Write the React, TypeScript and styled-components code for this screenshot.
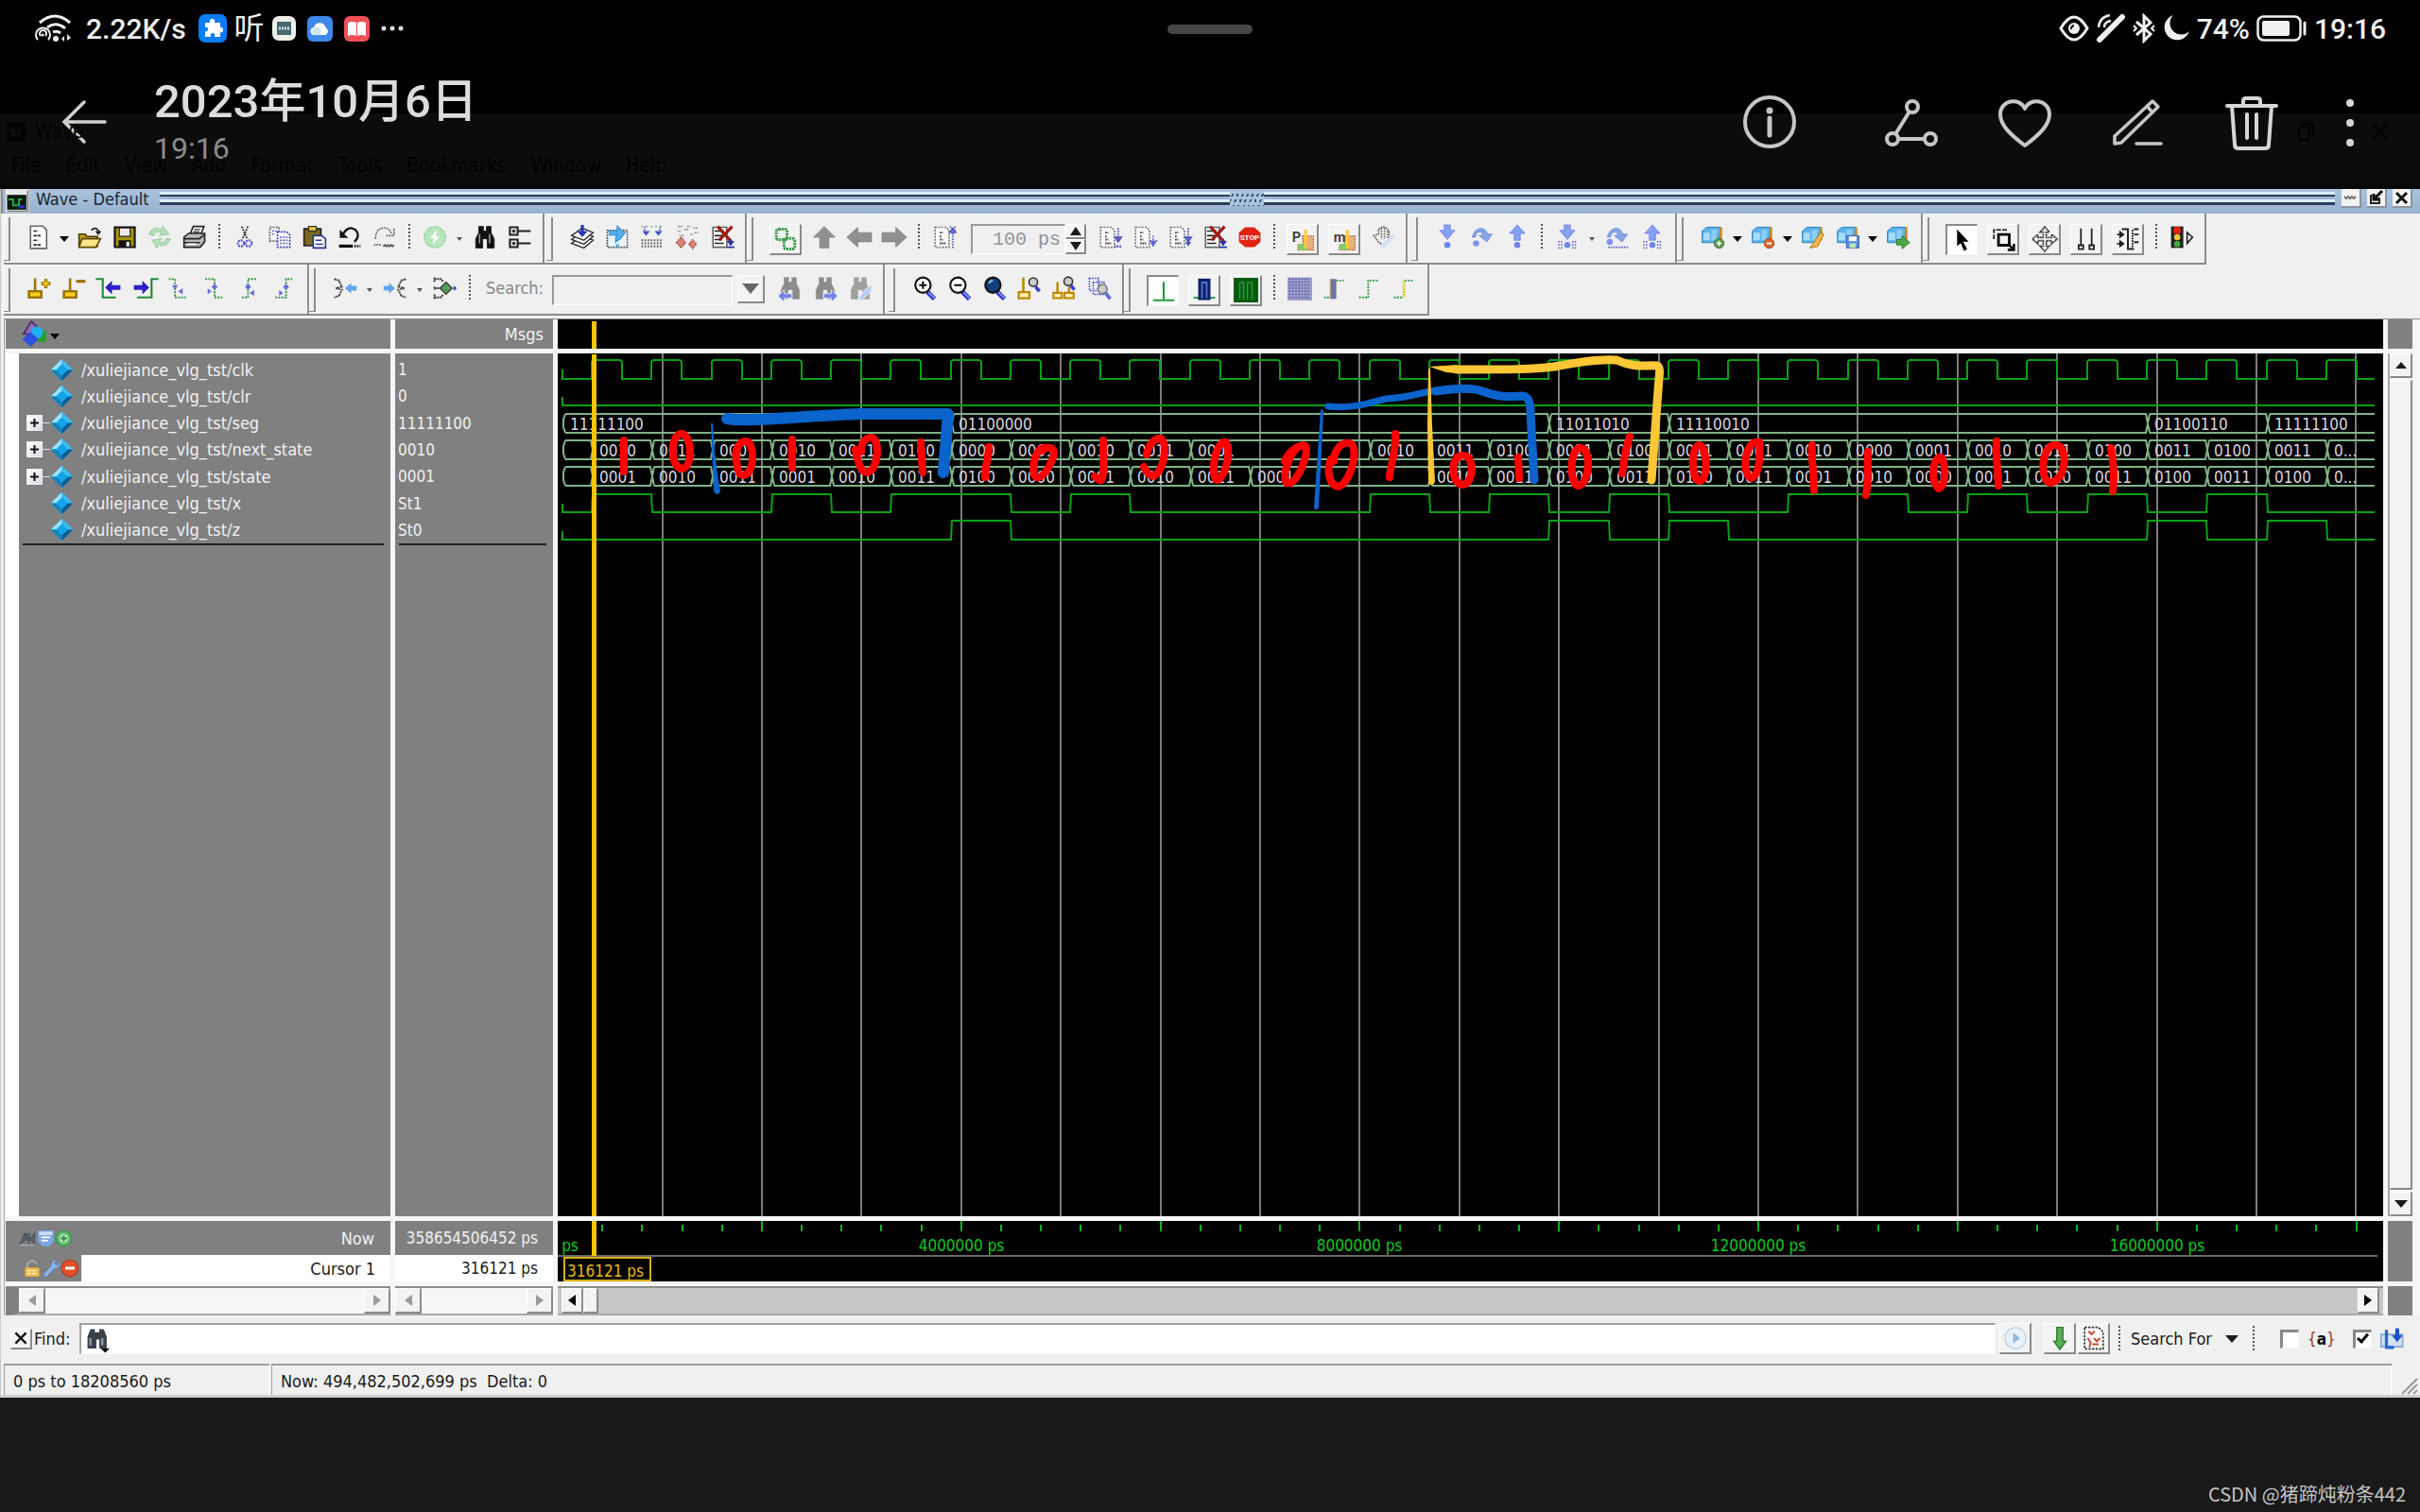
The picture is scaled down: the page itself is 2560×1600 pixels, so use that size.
import React from 'react';
import styled, { createGlobalStyle, css } from 'styled-components';

const UI = "'DejaVu Sans Condensed', Tahoma, 'Noto Sans', sans-serif";
const PHONE = "Roboto, 'Noto Sans CJK SC', sans-serif";

const Global = createGlobalStyle`
  *, *::before, *::after { box-sizing: border-box; }
  html, body, #root { margin: 0; height: 100%; }
  body { background: #191919; font-family: ${UI}; font-size: 18px; color: #1a1a1a; }
  button, input { font: inherit; color: inherit; margin: 0; padding: 0; border: 0; background: none; border-radius: 0; outline: none; }
  svg { display: block; }
`;

/* ---------- phone chrome ---------- */
const Page = styled.div`
  min-height: 100vh;
  display: flex;
  flex-direction: column;
  background: #191919;
`;
const Top = styled.header`
  position: relative;
  height: 200px;
  background: linear-gradient(#000 0 120px, #0c0c0c 120px 192px, #070709 200px);
  font-family: ${PHONE};
  color: #f0f0f0;
`;
const StatusLine = styled.div`
  position: relative;
  height: 60px;
  padding: 0 36px;
  display: flex;
  align-items: center;
  justify-content: space-between;
  font-size: 30px;
  font-weight: 500;
`;
const StatusSide = styled.div<{ $gap: number }>`
  display: flex;
  align-items: center;
  gap: ${(p) => p.$gap}px;
`;
const Listen = styled.span`
  margin: 0 -4px;
  font-size: 32px;
  line-height: 32px;
  font-weight: 400;
`;
const Handle = styled.div`
  position: absolute;
  left: 50%;
  top: 26px;
  width: 90px;
  height: 10px;
  margin-left: -45px;
  border-radius: 5px;
  background: #464646;
`;
const AppBar = styled.div`
  display: flex;
  align-items: flex-start;
  justify-content: space-between;
  padding: 12px 60px 0 60px;
`;
const AppSide = styled.div`
  display: flex;
`;
const BackButton = styled.button`
  width: 56px;
  height: 56px;
  margin: 30px 47px 0 0;
`;
const DateTitle = styled.h1`
  margin: 0;
  font-size: 49px;
  line-height: 72px;
  font-weight: 500;
  color: #dcdcdc;
`;
const DateTime = styled.div`
  font-size: 32px;
  line-height: 26px;
  color: #8c8c8c;
`;
const Actions = styled.div`
  display: flex;
  align-items: center;
  margin-top: 28px;
  gap: 60px;
`;
const ActionButton = styled.button<{ $narrow?: boolean; $first?: boolean }>`
  width: ${(p) => (p.$narrow ? 28 : 60)}px;
  height: 60px;
  margin-right: ${(p) => (p.$first ? 30 : 0)}px;
`;
const GhostTitle = styled.div`
  position: absolute;
  left: 5px;
  top: 126px;
  display: flex;
  align-items: center;
  gap: 8px;
  color: #020202;
  font: 21px/26px ${UI};
`;
const GhostMenu = styled.nav`
  position: absolute;
  left: 12px;
  top: 162px;
  display: flex;
  gap: 26px;
  color: #020202;
  font: 21px/26px ${UI};
`;
const GhostControls = styled.div`
  position: absolute;
  right: 32px;
  top: 128px;
  display: flex;
  gap: 58px;
`;

/* ---------- desktop window ---------- */
const Window = styled.main`
  flex: 1;
  display: flex;
  flex-direction: column;
  background: #f0f0f0;
  border-left: 1px solid #c8c8c8;
  border-bottom: 3px solid #cfcfcf;
`;
const TitleBar = styled.div`
  height: 26px;
  padding: 0 8px 0 3px;
  display: flex;
  align-items: flex-start;
  gap: 7px;
  border-left: 2px solid #8a8a8a;
  background: linear-gradient(#a9c3dc, #98b2d0);
  color: #1c2430;
`;
const TitleText = styled.span`
  line-height: 22px;
  margin-right: 4px;
`;
const GripLines = styled.div`
  flex: 1;
  height: 16px;
  margin-top: 2px;
  display: flex;
  justify-content: center;
  background: linear-gradient(
    transparent 0 1px, #d6effd 1px 4px, #2f3d58 4px 6px,
    #9bb6d4 6px 9px, #d6effd 9px 12px, #2f3d58 12px 15px, transparent 15px);
`;
const GripDots = styled.div`
  width: 36px;
  height: 16px;
  background:
    repeating-linear-gradient(#a9c3dc 0 3px, transparent 3px 6px),
    repeating-linear-gradient(110deg, #a9c3dc 0 3px, #3d5273 3px 5px);
`;
const TitleButtons = styled.div`
  display: flex;
  gap: 6px;
`;
const TitleButton = styled.button`
  width: 21px;
  height: 20px;
  background: #f2f2f2;
  border-right: 2px solid #8a94a0;
  border-bottom: 2px solid #8a94a0;
`;
const ToolbarRow = styled.div`
  display: flex;
  height: 54px;
  padding-left: 3px;
`;
const Group = styled.div<{ $pad?: number }>`
  display: flex;
  align-items: flex-start;
  padding: 11px 6px 0 ${(p) => p.$pad ?? 0}px;
  border: solid #8c8c8c;
  border-width: 0 2px 2px 0;
  box-shadow: inset 1px 1px 0 #fff;
`;
const Handlebar = styled.span`
  width: 7px;
  height: 46px;
  margin: -7px 12px 0 0;
  border: solid #8c8c8c;
  border-width: 0 2px 1px 0;
`;
const raised = css`
  background: #f3f3f3;
  border: solid;
  border-width: 1px 2px 2px 1px;
  border-color: #fff #8a8a8a #8a8a8a #fff;
`;
const pressed = css`
  background: #fff;
  border: solid;
  border-width: 2px 1px 1px 2px;
  border-color: #8a8a8a #f4f4f4 #f4f4f4 #8a8a8a;
`;
const Tool = styled.button<{ $kind?: 'up' | 'down' }>`
  flex: none;
  display: flex;
  align-items: center;
  justify-content: center;
  width: ${(p) => (p.$kind ? 34 : 37)}px;
  height: ${(p) => (p.$kind ? 33 : 28)}px;
  margin: 0 ${(p) => (p.$kind ? 5 : 0)}px;
  ${(p) => p.$kind === 'up' && raised}
  ${(p) => p.$kind === 'down' && pressed}
`;
const Caret = styled.button<{ $dim?: boolean }>`
  flex: none;
  width: 16px;
  height: 28px;
  display: flex;
  align-items: center;
  justify-content: center;
  &::after {
    content: '';
    margin-top: 4px;
    border: solid transparent;
    border-width: ${(p) => (p.$dim ? '4px 3px 0' : '6px 5px 0')};
    border-top-color: ${(p) => (p.$dim ? '#555' : '#000')};
  }
`;
const Sep = styled.span`
  flex: none;
  width: 2px;
  height: 28px;
  margin: 0 7px;
  background: repeating-linear-gradient(#555 0 2px, transparent 2px 4px);
`;
const TimeInput = styled.input`
  width: 100px;
  height: 32px;
  margin-left: 10px;
  padding-right: 4px;
  border: solid;
  border-width: 2px 1px 1px 2px;
  border-color: #999 #fff #fff #999;
  color: #8f9498;
  font: 20px 'Liberation Mono', monospace;
  text-align: right;
`;
const Spinner = styled.div`
  display: flex;
  flex-direction: column;
  width: 22px;
  margin-right: 6px;
`;
const SpinButton = styled.button`
  height: 16px;
  display: flex;
  align-items: center;
  justify-content: center;
  ${raised}
`;
const SearchLabel = styled.label`
  margin: 0 9px;
  color: #858585;
  line-height: 27px;
`;
const SearchInput = styled.input`
  width: 191px;
  height: 32px;
  border: solid;
  border-width: 2px 1px 1px 2px;
  border-color: #999 #fff #fff #999;
`;
const DropButton = styled.button`
  width: 29px;
  height: 30px;
  margin: 0 8px 0 5px;
  display: flex;
  align-items: center;
  justify-content: center;
  ${raised}
`;

/* ---------- panes ---------- */
const Panes = styled.div`
  flex: 1;
  display: grid;
  grid-template-columns: 407px 167px 1fr 26px;
  grid-template-rows: 31px 1fr 64px 31px;
  gap: 5px;
  margin: 3px 0 0 3px;
  padding: 0 8px 0 1px;
  background: #f6f6f6;
  border-top: 1px solid #8c8c8c;
  border-left: 1px solid #a0a0a0;
`;
const HeadCell = styled.div<{ $end?: boolean }>`
  display: flex;
  align-items: center;
  justify-content: ${(p) => (p.$end ? 'flex-end' : 'flex-start')};
  padding: 0 10px 0 17px;
  background: #808080;
  color: #f4f4f4;
`;
const Black = styled.div`
  min-width: 0;
  overflow: hidden;
  background: #000;
`;
const Gray = styled.div`
  background: #808080;
`;
const NamesPane = styled.div`
  border-left: 14px solid #fff;
  background: #808080;
  color: #f2f2f2;
`;
const ValuesPane = styled(NamesPane)`
  border-left: 0;
  font-size: 17px;
`;
const SignalList = styled.ul`
  list-style: none;
  margin: 0;
  padding: 3px 0 0;
  height: 201px;
  display: grid;
  grid-template-rows: repeat(7, 1fr);
`;
const NameRow = styled.li`
  display: flex;
  align-items: center;
  padding-left: 8px;
`;
const ExpandSlot = styled.span`
  width: 25px;
  display: flex;
  align-items: center;
  &:has(button)::after {
    content: '';
    flex: 1;
    height: 1px;
    background: #ddd;
  }
`;
const Expand = styled.button`
  width: 17px;
  height: 17px;
  display: flex;
  align-items: center;
  justify-content: center;
  background: linear-gradient(135deg, #fff, #d8dbe4);
  border: 1px solid #eee;
`;
const SignalName = styled.span`
  margin-left: 8px;
`;
const ValueRow = styled.li`
  display: flex;
  align-items: center;
  padding-left: 3px;
`;
const EndLine = styled.div`
  height: 2px;
  margin: 0 7px 0 4px;
  background: #222;
`;
const CursorCell = styled.div`
  display: grid;
  grid-template-rows: 36px 28px;
  background: #808080;
`;
const NowRow = styled.div<{ $small?: boolean }>`
  display: flex;
  align-items: center;
  justify-content: space-between;
  padding: 0 ${(p) => (p.$small ? 16 : 17)}px 0 ${(p) => (p.$small ? 0 : 14)}px;
  font-size: ${(p) => (p.$small ? 17 : 18)}px;
  white-space: nowrap;
  color: #f2f2f2;
`;
const CursorRow = styled.div<{ $small?: boolean }>`
  display: flex;
  align-items: center;
  justify-content: flex-end;
  padding-right: 16px;
  font-size: ${(p) => (p.$small ? 17 : 18)}px;
  background: #fff;
`;
const CursorIcons = styled.div`
  display: flex;
  align-items: center;
  margin-left: 18px;
`;
const CursorLine = styled.div`
  display: grid;
  grid-template-columns: 80px 1fr;
`;
const HScroll = styled.div<{ $inset?: number; $dark?: boolean }>`
  display: flex;
  justify-content: space-between;
  border-left: ${(p) => p.$inset ?? 0}px solid #808080;
  border-top: 2px solid #8c8c8c;
  border-bottom: 2px solid #a8a8a8;
  padding: 0 ${(p) => (p.$dark ? 4 : 0)}px;
  background: ${(p) => (p.$dark ? '#c6c6c6' : '#f6f6f6')};
`;
const ScrollButton = styled.button<{ $small?: boolean; $disabled?: boolean }>`
  width: ${(p) => (p.$small ? 23 : 28)}px;
  height: 27px;
  display: flex;
  align-items: center;
  justify-content: center;
  color: ${(p) => (p.$disabled ? '#9a9a9a' : '#000')};
  ${raised}
`;
const Thumb = styled.div`
  width: 16px;
  margin-right: auto;
  ${raised}
`;
const VScroll = styled.div`
  display: flex;
  flex-direction: column;
  border-left: 2px solid #a4a4a4;
`;
const VButton = styled.button`
  height: 26px;
  display: flex;
  align-items: center;
  justify-content: center;
  ${raised}
`;
const VThumb = styled.div`
  flex: 1;
  margin: 2px 0;
  ${raised}
`;

/* ---------- bottom bars ---------- */
const FindBar = styled.form`
  height: 51px;
  display: flex;
  align-items: center;
  padding: 0 16px 2px 10px;
`;
const CloseFind = styled.button`
  width: 23px;
  height: 22px;
  margin-right: 2px;
  display: flex;
  align-items: center;
  justify-content: center;
  ${raised}
`;
const FindField = styled.div`
  flex: 1;
  display: flex;
  align-items: center;
  height: 33px;
  margin: 0 4px 0 9px;
  padding-left: 5px;
  background: #fff;
  border: solid;
  border-width: 2px 1px 1px 2px;
  border-color: #a0a0a0 #f4f4f4 #f4f4f4 #a0a0a0;
`;
const FindInput = styled.input`
  flex: 1;
  height: 28px;
`;
const FindButton = styled(Tool)`
  margin: 0 2px 0 0;
`;
const Spacer = styled.span`
  width: 11px;
`;
const SearchFor = styled.button`
  display: flex;
  align-items: center;
  gap: 14px;
  margin: 0 8px 0 4px;
`;
const OptionLabel = styled.label`
  display: flex;
  align-items: center;
  gap: 9px;
  margin-left: 20px;
`;
const Check = styled.input`
  appearance: none;
  width: 20px;
  height: 20px;
  background: #fff;
  border: solid;
  border-width: 3px 1px 1px 3px;
  border-color: #888 #f4f4f4 #f4f4f4 #888;
  &:checked::after {
    content: '';
    display: block;
    width: 7px;
    height: 12px;
    margin: -1px 0 0 4px;
    border: solid #000;
    border-width: 0 3px 3px 0;
    transform: rotate(40deg);
  }
`;
const Braces = styled.span`
  color: #9a3a20;
  width: 28px;
  font-size: 17px;
  b { color: #000; }
`;
const StatusBar = styled.footer`
  height: 33px;
  display: flex;
  align-items: stretch;
  gap: 2px;
  padding: 0 2px 0 3px;
`;
const StatusCell = styled.div<{ $fill?: boolean }>`
  ${(p) => (p.$fill ? 'flex: 1;' : 'width: 281px;')}
  padding: 1px 9px 0;
  display: flex;
  align-items: center;
  white-space: pre;
  border: solid #a0a0a0;
  border-width: 2px 0 0 1px;
  box-shadow: inset -1px 0 0 #fff;
`;
const SizeGrip = styled.div`
  width: 26px;
  display: flex;
  align-items: flex-end;
  justify-content: flex-end;
`;
const Watermark = styled.div`
  height: 121px;
  display: flex;
  align-items: flex-end;
  justify-content: flex-end;
  padding: 0 15px 5px;
  color: #c4c4c4;
  font: 20px/28px 'Noto Sans CJK SC', sans-serif;
`;

/* ---------- icons, all on a 16 unit grid ---------- */
const dash = { strokeDasharray: '1 .7' };
const Fall = ({ x }: { x: number }) => (
  <g stroke="#4f52c0" fill="#6f72d8"><path d={`M${x} 2v9`} {...dash} /><path d={`M${x - 2} 8h4l-2 3z`} /></g>
);
const doc = <path d="M2 1.5h7l2 2v11H2z" fill="#fafafa" stroke="#777" strokeDasharray="1.2 .8" />;
const docLines = <path d="M5 5h2M5 7.500h1M5 9.500h2M5 12h4" stroke="#444" strokeWidth="1.200" strokeDasharray="1 .4" fill="none" />;
const bino = (c: string, d?: object) => (
  <path d="M4 1h3v3h2V1h3v4l2 4v6H9.500V9h-3v6H2V9l2-4z" fill={c} stroke={c} strokeWidth=".5" {...d} />
);
const box3d = (
  <g><path d="M1 4l3-2.500h9L12 10l-2 1.500H1z" fill="#5ab4ec" stroke="#2a7dbd" strokeWidth=".6" /><path d="M2 5h4v5H1.500z" fill="#a8dcf8" /><path d="M7 3h4l-1 7H7z" fill="#8ccdf4" /><path d="M12.500 1.500h1.500v8l-2 2h-1.500l1.500-2z" fill="#c98a28" /></g>
);
const stick = (x: number) => <path d={`M${x} 1.500v8.500M${x - 4} 10h8v4h-8z`} stroke="#9c7400" strokeWidth="1.600" fill="#ffd21e" />;
const lens = (c: string) => (
  <g><path d="M10 10.500l4.500 4.500" stroke="#2b2fd0" strokeWidth="3" /><path d="M10.500 10.500l4 4" stroke="#8b9cf5" strokeWidth="1" /><circle cx="7" cy="6" r="5" fill={c} stroke="#111" strokeWidth="1.300" /></g>
);
const blueArrow = (x: number, up?: boolean) => (
  <path d={up ? `M${x} 0l5 5.500h-3v4.500h-4V5.500H${x - 5}z` : `M${x - 2} 0h4v3.500h3l-5 6-5-6h3z`} fill="#86a0f2" stroke="#5b6ee6" strokeWidth=".6" strokeDasharray="1 .5" />
);
const curve = <path d="M1.500 8C3 1 10 .5 11.500 6h3l-3.500 5-5-4 2.500-.5C7.500 3.500 4 4 3.500 8z" fill="#86a6e6" stroke="#5b7be0" strokeWidth=".6" strokeDasharray="1 .5" />;
const wave = (d: string, c = '#2f9a48') => <path d={d} stroke={c} strokeWidth="1.200" fill="none" strokeDasharray="1.200 .8" />;
const gridDots = (y: number) => <path d={`M1 ${y}h14M1 ${y + 2}h14M1 ${y + 4}h14`} stroke="#444d" strokeWidth="1.200" strokeDasharray="1 1" />;
const profile = (
  <g><path d="M8 6h7v9H5v-3h3z" fill="#e9b080" stroke="#c07040" strokeDasharray="1 .7" /><path d="M5 11h6v4H5z" fill="#7fd06a" /><path d="M10 2v12" stroke="#ffc840" strokeWidth="2" /></g>
);

const ICONS: Record<string, React.ReactNode> = {
  ghost: <g><path d="M1 2h14v13H1z" fill="#050505" /><path d="M3 7h3v4h4V7h2" stroke="#111" fill="none" /></g>,
  new: <g><path d="M2 .8h8l2.500 2.500v12H2z" fill="#fff" stroke="#666" /><path d="M4 4h3M4 7h5M4 10h3M4 13h5" stroke="#222" strokeDasharray="2 .6" /></g>,
  open: <g><path d="M1 6h4l1 1.500h7V14H1z" fill="#c8a028" stroke="#4a3a00" /><path d="M3 9h12l-3 5.500H1z" fill="#ffe58a" stroke="#5a4700" /><path d="M9 3.500q2.500-2.500 4.500 0v2M12 4l1.500 2 1.500-2" fill="none" stroke="#222" /></g>,
  save: <g><path d="M1.500 1.500h13v13h-13z" fill="#a59300" stroke="#111" strokeWidth="1.300" /><path d="M4.500 2h7v5.500h-7z" fill="#eee" stroke="#222" strokeWidth=".7" /><path d="M4 10h8v4.500H4z" fill="#111" /><path d="M9 11h2v3H9z" fill="#eee" /></g>,
  refresh: <g fill="#b5e0ba" stroke="#86c490" strokeWidth=".7" strokeDasharray="1 .6"><path d="M1 6Q4 0 9 3l1-2 4 5-6 1 1-2Q5 3 4 7z" /><path d="M15 9q-3 6-8 4l-1 2-3-5 6-1-1 2q4 1 4-2z" /></g>,
  print: <g><path d="M5 6l2-5h7l-2 5" fill="#fff" stroke="#222" /><path d="M7.500 3h4M7 4.500h4" stroke="#333" strokeWidth=".7" /><path d="M1 8l3-2.500h10.500V11l-3 3.500H1z" fill="#bbb" stroke="#222" /><path d="M1 9h10l3-2.500M1 11.500h10.500" stroke="#222" fill="none" /><path d="M3 12.500h6" stroke="#fff" /></g>,
  cut: <g fill="none" strokeWidth="1.200" strokeDasharray="1.200 .6"><path d="M6 1l3.500 8M10 1L6.500 9" stroke="#444" /><circle cx="5.500" cy="12" r="2" stroke="#3a45d0" /><circle cx="10.500" cy="12" r="2" stroke="#3a45d0" /></g>,
  copy: <g fill="#f6f6f6" strokeDasharray="1.200 .8"><path d="M1.500 1.500h6v9h-6z" stroke="#666" /><path d="M6.500 4.500h6l2 2v8h-8z" stroke="#3743b5" /><path d="M8 8h5M8 10h5M8 12h5M3 4h3M3 6h2" stroke="#5560c0" /></g>,
  paste: <g><path d="M1 2.500h11v11H1z" fill="#7c6a22" stroke="#222" /><path d="M4 1h5v3H4z" fill="#f0d040" stroke="#333" strokeWidth=".8" /><path d="M7 7h5.500L15 9v6H7z" fill="#fff" stroke="#23309a" /><path d="M8.500 10h4M8.500 12.500h5" stroke="#23309a" strokeWidth=".8" /></g>,
  undo: <g fill="none" stroke="#111"><path d="M3 7Q7-.5 12 3.500q3 4-1 7.500" strokeWidth="1.400" /><path d="M1.500 3v5.500H7z" fill="#111" stroke="none" /><path d="M1 13.800h9" strokeWidth="2" /><path d="M11 13.800h4" strokeWidth="1.600" strokeDasharray="1 .7" /></g>,
  redo: <g fill="none" stroke="#555" {...dash}><path d="M2 9q0-7 6-7 3 0 4.500 4" /><path d="M9 7h5V2" /><path d="M1 13h5" /><path d="M7 14l1-1 1 1 1-1 1 1 1-1 1 1 1-1" strokeDasharray="none" /></g>,
  bolt: <g><circle cx="8" cy="8" r="6.800" fill="#b9e6bd" stroke="#8fcf98" strokeDasharray="1 .6" /><path d="M9.500 3L5 8.500h2.500L6.500 13 11 7.500H8.500z" fill="#fff" /></g>,
  find: <g>{bino('#111')}<path d="M4.500 6v6M11 6v6" stroke="#999" /></g>,
  tree: <g fill="none" stroke="#222" strokeWidth="1.300"><path d="M1.500 1.500h5v5h-5zM1.500 9.500h5v5h-5zM7 4h8M7 12h8M4 3v2M3 4h2M4 11v2M3 12h2" /></g>,
  stack: <g stroke="#333" strokeWidth=".9" fill="#fff"><path d="M1 12l8 3 6-5-7-3z" /><path d="M1 9.500l8 3 6-5-7-3z" /><path d="M1 7l8 3 6-5-7-3z" /><path d="M7 0h2v4h2.500L8 8 4.500 4H7z" fill="#2a3ab8" stroke="none" /></g>,
  rebuild: <g><path d="M1.500 3.500h13v11h-13z" fill="#e8f5fc" stroke="#444" {...dash} /><path d="M3 4h5V1l5 4-3 4-3 2v-3l1-1.500H3z" fill="#5ab0ec" stroke="#3d8fd6" strokeDasharray="1.500 .4" /><path d="M7 12.500h2v2H7z" fill="#5ab0ec" /></g>,
  restart: <g><path d="M3 1v3M13 1v3" stroke="#4450c8" {...dash} /><path d="M1.500 4h5l-2.500 3zM9.500 4h5L12 7z" fill="#4450c8" /><path d="M1 1h14" stroke="#999" strokeDasharray="1 2" />{gridDots(10)}</g>,
  dots: <g><path d="M2 1h3M8 1h2M12 2h3M2 4h2M6 3h3M3 7h3M10 6h2M13 5h2" stroke="#888" strokeDasharray="1 .6" /><path d="M1 11.500L4 8l3 3.500L4 15zM9 12.500l2.500-3 2.500 3-2.500 3z" fill="#dd8478" stroke="#a04a40" strokeDasharray="1 .6" strokeWidth=".8" /></g>,
  kill: <g><path d="M2 1.500h9v13H2z" fill="#fff" stroke="#666" /><path d="M3 4h6M3 7h5M3 9.500h5M3 12h6" stroke="#222" /><path d="M5 1l9 10M14.500 1L6 10" stroke="#a01c10" strokeWidth="2" /><path d="M13.500 9v4M11 14.500h5M12 11h3l-1.500 2z" stroke="#2a33a8" fill="#2a33a8" /></g>,
  link: <g fill="none" stroke="#3a9a4c" strokeWidth="1.800" strokeDasharray="1.400 .5"><rect x="2" y="1.500" width="7" height="7" rx="1.500" /><rect x="7" y="7.500" width="7" height="7" rx="1.500" /></g>,
  up: <path d="M8 1l7 7h-4v7H5V8H1z" fill="#909090" stroke="#777" strokeWidth=".6" strokeDasharray="1 .5" />,
  left: <path d="M0 8l7-6.500V5h9v6H7v3.500z" fill="#909090" stroke="#777" strokeWidth=".6" strokeDasharray="1 .5" />,
  right: <path d="M16 8L9 1.500V5H0v6h9v3.500z" fill="#909090" stroke="#777" strokeWidth=".6" strokeDasharray="1 .5" />,
  runUp: <g>{doc}{docLines}<path d="M13.500 15V4" stroke="#4f52c0" {...dash} /><path d="M11.500 1l4 3M15.500 1l-4 3M11.500 5h4l-2-3z" stroke="#4f52c0" fill="#6f72d8" strokeWidth=".7" /></g>,
  runEnd: <g>{doc}{docLines}<Fall x={13.5} /><path d="M11 14h5" stroke="#4f52c0" strokeWidth="1.400" {...dash} /></g>,
  runStep: <g>{doc}{docLines}<path d="M13.500 7v6M11.500 10.500h4l-2 3z" stroke="#4f52c0" fill="#6f72d8" {...dash} /></g>,
  runAll: <g>{doc}{docLines}<Fall x={13.5} /><path d="M11.500 11h4l-2 3z" fill="#4f52c0" /></g>,
  stop: <g><path d="M5 1.500h6L15 5v6l-4 3.500H5L1 11V5z" fill="#e0220e" /><text x="8" y="10" fontSize="5" fontWeight="700" textAnchor="middle" fill="#fff" fontFamily="Roboto, sans-serif">STOP</text></g>,
  profP: <g>{profile}<text x="1" y="10" fontSize="9" fontWeight="700" fill="#444" fontFamily="Roboto, sans-serif">P</text></g>,
  profM: <g>{profile}<text x="1" y="10" fontSize="9" fontWeight="700" fill="#444" fontFamily="Roboto, sans-serif">m</text></g>,
  hand: <g><path d="M5 6V3l1.500-1L8 1l2 1 2 2v6l-3 4-4-3-3-4z" fill="#eee" stroke="#555" strokeDasharray="1 .7" /><path d="M7 2v7M9 2v7M11 4v5" stroke="#777" {...dash} /><path d="M6 14l8-8 2 2-7 7z" fill="#d5e2f5" /></g>,
  stepIn: <g>{blueArrow(8)}<circle cx="8" cy="13" r="2" fill="#6f86ee" /></g>,
  stepOver: <g>{curve}<circle cx="4" cy="12" r="2" fill="#7b92f0" /></g>,
  stepOut: <g>{blueArrow(8, true)}<circle cx="8" cy="13" r="2" fill="#6f86ee" /></g>,
  stepInG: <g>{blueArrow(8)}<path d="M2 11h3M2 13h3M2 15h3M11 11h3M11 13h3M11 15h3" stroke="#6f74d0" {...dash} /><circle cx="8" cy="13" r="2" fill="#6f86ee" /></g>,
  stepOverG: <g>{curve}<circle cx="3" cy="11" r="2" fill="#7b92f0" /><path d="M2 14.500h13" stroke="#5b60c0" {...dash} /></g>,
  stepOutG: <g>{blueArrow(8, true)}<path d="M2 11h3M2 13h3M2 15h3M11 11h3M11 13h3M11 15h3" stroke="#6f74d0" {...dash} /><circle cx="8" cy="13" r="2" fill="#6f86ee" /></g>,
  boxAdd: <g>{box3d}<circle cx="12" cy="12" r="3.200" fill="#5d9a50" stroke="#3f7438" strokeWidth=".6" /><path d="M12 10.300v3.400M10.300 12h3.400" stroke="#fff" /></g>,
  boxDel: <g>{box3d}<circle cx="12" cy="12" r="3.200" fill="#d9652a" stroke="#a84412" strokeWidth=".6" /><path d="M10.300 12h3.400" stroke="#fff" strokeWidth="1.200" /></g>,
  boxEdit: <g>{box3d}<path d="M13 5l2 1-4 8-5 1 2-3z" fill="#f4b44a" stroke="#b87818" strokeWidth=".6" /></g>,
  boxSave: <g>{box3d}<path d="M7 7h8v8H7z" fill="#5f8fe0" stroke="#3560b8" strokeWidth=".6" /><path d="M8.500 7.500h5v3h-5z" fill="#fff" /><path d="M9 12h4v3H9z" fill="#b8e8b0" /></g>,
  boxGo: <g>{box3d}<path d="M7 9.500h3.500V7l5 4.500-5 4V13H7z" fill="#4fa848" stroke="#2f7a2c" strokeWidth=".6" /></g>,
  pointer: <path d="M4.500 1l7.500 8H8.500l2.500 5-2 1-2.200-5L4.500 12z" fill="#000" />,
  zoomBox: <g fill="none" stroke="#111"><path d="M2 8V2h9" strokeDasharray="3 .8" /><path d="M5 5h7v7H5z" strokeWidth="1.800" /><path d="M11 11l4 4M15 11v4h-4" strokeWidth="1.600" /></g>,
  pan: <g fill="#fff" stroke="#333" strokeWidth="1.100" strokeDasharray="1.200 .4"><path d="M8 0l3 3.500H9V7h3.500V5L16 8l-3.500 3V9H9v3.500h2L8 16l-3-3.500h2V9H3.500v2L0 8l3.500-3v2H7V3.500H5z" /></g>,
  cursors: <g fill="none" stroke="#222" strokeWidth="1.100"><path d="M4.500 1v10.500M11.500 1v10.500M3 12h3v2.500H3zM10 12h3v2.500h-3z" /></g>,
  edges: <g fill="none" stroke="#222" strokeWidth="1.200"><path d="M4 1.500h4v13h4M12 1.500h3" /><path d="M11 2v12" {...dash} /><path d="M1 5h3M1 11h3M12 5h3M12 10h3" /><path d="M3 3.500L5 5 3 6.500zM3 9.500L5 11l-2 1.500z" fill="#222" /></g>,
  light: <g><path d="M1 1h8v14H1z" fill="#222" /><circle cx="5" cy="3.500" r="2.500" fill="#e8200c" /><circle cx="5" cy="8" r="2" fill="#f3c63a" /><circle cx="5" cy="12.500" r="2" fill="#3fae3c" /><path d="M11.500 5l3.500 3-3.500 4z" fill="#fff" stroke="#222" /></g>,
  curAdd: <g>{stick(5)}<path d="M12 2v6M9 5h6" stroke="#9c7400" strokeWidth="2.200" /><path d="M12 3v4M10 5h4" stroke="#ffd21e" /></g>,
  curDel: <g>{stick(5)}<path d="M9 3.500h6" stroke="#9c7400" strokeWidth="2" /></g>,
  prevEdge: <g fill="none" stroke="#1f8a34" strokeWidth="1.300"><path d="M-1 2h4.500v12H12" /><path d="M5 7.500L9.500 3v3H15v3H9.500v3z" fill="#2b20c8" stroke="none" /></g>,
  nextEdge: <g fill="none" stroke="#1f8a34" strokeWidth="1.300"><path d="M3 14h9.500V2H17" /><path d="M11 7.500L6.500 3v3H1v3h5.500v3z" fill="#2b20c8" stroke="none" /></g>,
  edgeA: <g>{wave('M1 2h4v12h7')}<path d="M3 6h4L5 9zM7 10l3-2v4zM10 10h2" fill="#6a6ddc" /></g>,
  edgeB: <g>{wave('M2 2h6v12h5')}<path d="M6 7l2-2 2 2-2 2zM6 10L3.500 8v4z" fill="#6a6ddc" /></g>,
  edgeC: <g>{wave('M3 14h4V2h6')}<path d="M5 7l2-2 2 2-2 2zM8 11l3-2v4z" fill="#6a6ddc" /></g>,
  edgeD: <g>{wave('M2 14h7V2h4')}<path d="M7 7l2-2 2 2-2 2zM7 11L4.500 9v4z" fill="#6a6ddc" /></g>,
  mergeL: <g><path d="M1 2l3 1 2 4-4 1 4 1-2 4-3 1" fill="none" stroke="#444" strokeDasharray="1.400 .5" strokeWidth="1.200" /><path d="M8 8l4-3.500v2h3.500v3H12v2z" fill="#64a4ee" /></g>,
  mergeR: <g><path d="M15 2l-3 1-2 4 4 1-4 1 2 4 3 1" fill="none" stroke="#444" strokeDasharray="1.400 .5" strokeWidth="1.200" /><path d="M8 8L4 4.500v2H.5v3H4v2z" fill="#64a4ee" /></g>,
  gate: <g><path d="M1 2h4l2 2M1 8h4M1 14h4l2-2M1 1v3M1 7v2M1 12v3" fill="none" stroke="#333" strokeDasharray="1.200 .5" strokeWidth="1.200" /><path d="M8.500 4l4 4-4 4-4-4z" fill="#5a9a5c" stroke="#333" strokeWidth=".7" /><path d="M13 8l1-1.500L15.500 8 14 9.500z" fill="#3a45d0" /></g>,
  findPrev: <g>{bino('#8c8c8c', dash)}<path d="M0 13l4-4v2.500h5v3H4V17z" fill="#7a80ea" stroke="#f0f0f0" strokeWidth=".5" /></g>,
  findNext: <g>{bino('#8c8c8c', dash)}<path d="M16 13l-4-4v2.500H7v3h5V17z" fill="#7a80ea" stroke="#f0f0f0" strokeWidth=".5" /></g>,
  findOpt: <g>{bino('#a0a0a0', dash)}<path d="M7 14l5-6 4-2-1 4-6 6z" fill="#b6cdf4" stroke="#f0f0f0" strokeWidth=".5" /></g>,
  zoomIn: <g>{lens('#fff')}<path d="M7 3.500v5M4.500 6h5" stroke="#111" strokeWidth="1.300" /></g>,
  zoomOut: <g>{lens('#fff')}<path d="M4.500 6h5" stroke="#111" strokeWidth="1.300" /></g>,
  zoomFull: <g>{lens('#11407c')}<path d="M4.500 5q.5-2 2.500-2" stroke="#9cc8f0" fill="none" /></g>,
  zoomCur: <g><path d="M4 1v9" stroke="#c08600" strokeWidth="1.600" /><path d="M1 10.500h7v4H1z" fill="#fff3b0" stroke="#c08600" strokeWidth="1.400" /><path d="M12 7l2.500 3" stroke="#3a3fd0" strokeWidth="2.200" /><circle cx="10.500" cy="4" r="2.800" fill="#ccc" stroke="#333" /></g>,
  zoomTwo: <g><path d="M3.500 4v7M11 7v4" stroke="#c08600" strokeWidth="1.500" /><path d="M.8 11h5.500v3.500H.8zM8 11h6v3.500H8z" fill="#fff3b0" stroke="#c08600" strokeWidth="1.300" /><path d="M12 6l2.500 3" stroke="#3a3fd0" strokeWidth="2.200" /><circle cx="10.500" cy="3.500" r="2.800" fill="#ccc" stroke="#333" /></g>,
  zoomSel: <g><path d="M1.500 1.500h6v8h-6zM4 4h7v8H4z" fill="none" stroke="#3a45d0" {...dash} /><path d="M12 11l3 4" stroke="#6a6fe0" strokeWidth="2.400" /><circle cx="10" cy="8.500" r="3" fill="#ccc" stroke="#555" strokeDasharray="1 .5" /></g>,
  patA: <path d="M8 2v12M1 14h14" stroke="#1f9a3a" strokeWidth="1.300" />,
  patB: <g><path d="M1 13h14" stroke="#2f9a48" strokeWidth="1.300" /><path d="M4 .5h8v14H4z" fill="#0e1f6c" /><path d="M6.500 13V3h3v10" fill="none" stroke="#5a80d0" /></g>,
  patC: <g><path d="M0 0h16v16H0z" fill="#075c10" /><path d="M4 14V3h2.500v11M9 14V3h3v11" fill="none" stroke="#2d9a38" strokeWidth=".8" /></g>,
  patD: <g><path d="M0 1h16v15H0z" fill="#9a9ccc" /><path d="M1 2h14M1 4h14M1 6h14M1 8h14M1 10h14M1 12h14M1 14h14" stroke="#5b5f9c" strokeDasharray="1 1" /></g>,
  patE: <g><path d="M5 2h4v13H5z" fill="#7074a8" />{wave('M1 14h4M9 3h5')}<path d="M5 3v11" stroke="#e0c040" {...dash} /></g>,
  patF: wave('M1 14h6V3h7'),
  patG: <g>{wave('M1 14h6M8 3h6')}<path d="M7.500 3v11" stroke="#d8c820" strokeWidth="1.800" strokeDasharray="1.200 .5" /></g>,
  waveWin: <g><path d="M0 0h16v16H0z" fill="#e8e8e8" /><path d="M1 4h13v10H1z" fill="#041a10" /><path d="M2 7h3v4h4V7h2" stroke="#1fae4a" fill="none" strokeWidth="1.200" /><path d="M9 11h4v2H9z" fill="#2a32c0" /><path d="M15 1v14H1" stroke="#777" fill="none" /></g>,
  objects: <g><path d="M6 0l5 5-2 3H1l2-3z" fill="#8a70b0" stroke="#4a2470" /><path d="M10 6h5.500v7H10z" fill="#2c9c30" /><circle cx="9.500" cy="7" r="3.800" fill="#1fb0f0" /><path d="M5.500 6.500l5 4.700-5 4.800-5-4.800z" fill="#2c50e0" /></g>,
  diamond: <g><path d="M8 .5L15.500 8 8 15.500.5 8z" fill="#16a2e6" /><path d="M8 .5V4L4 8H.5z" fill="#9be4fc" /><path d="M8 .5V4l4 4h3.500z" fill="#3cbcf2" /><path d="M15.500 8H12l-4 4v3.500z" fill="#0a5c94" /><path d="M.5 8H4l4 4v3.500z" fill="#1480bc" /></g>,
  gear: <g><path d="M1 13L5 3l2 6zM6 4h4l-1 9zM10 9l4-6v10z" fill="#5a646e" stroke="#3c444c" strokeWidth=".6" /><path d="M1 14h13" stroke="#a8b2bc" /></g>,
  sheet: <g><path d="M1 1h14v10l-4 4H5l-4-4z" fill="#7aa7e6" /><path d="M2 2h12v3H2z" fill="#c8dcf8" /><path d="M4 7h8M4 10h6" stroke="#fff" strokeWidth="1.400" /></g>,
  plus: <g><circle cx="8" cy="8" r="7" fill="#58b868" stroke="#3b9050" /><circle cx="8" cy="8" r="4" fill="#bfeac4" /><path d="M8 5v6M5 8h6" stroke="#2c8c40" strokeWidth="1.500" /></g>,
  lock: <g><path d="M4 8V4.500Q8-1 12 4.500" fill="none" stroke="#9aa0a8" strokeWidth="2" /><path d="M2 7.500h12V15H2z" fill="#f2bc3c" /><path d="M4 10h8M4 12.500h8" stroke="#fff" strokeDasharray="3 1" /></g>,
  wrench: <path d="M1 14l7-8q0-5 5-5l-2 3 2 1.500L15.500 3q0 5-5 5.500L4 15.500z" fill="#8fb2ea" stroke="#5c7fc0" strokeWidth=".7" />,
  minus: <g><circle cx="8" cy="8" r="7" fill="#e2502c" stroke="#b33c20" /><path d="M4 8h8" stroke="#fff" strokeWidth="2.400" /></g>,
  findDark: <g><path d="M3 1h3v2h3V1h3l2 5v8H9V8H7v6H1V6z" fill="#3a4048" /><path d="M3 7v5M11 7v5" stroke="#8c98a8" strokeWidth="1.600" /><path d="M10 14h6l-3 3z" fill="#000" /></g>,
  play: <g><circle cx="8" cy="8" r="6.800" fill="#e8f0f8" stroke="#b4c6d8" strokeDasharray="1 .6" /><path d="M6.500 4.500L11 8l-4.500 3.500z" fill="#8db8e2" /></g>,
  down: <path d="M6 1h4v9h2L8 15.500 4 10h2z" fill="#5aae54" stroke="#2c7a30" strokeWidth=".8" />,
  report: <g><path d="M2 1h9l3 3v11H2z" fill="#fff" stroke="#333" strokeDasharray="1.500 .8" /><path d="M4.500 3.500l2 2 2-2M8 8l2 2 2-2M4 8l2 3-1 3M7 12h4" fill="none" stroke="#c8442c" strokeWidth="1.200" /></g>,
  wrap: <g><path d="M.5 5h14v8H.5z" fill="#d4e0f4" stroke="#8aa6d8" /><path d="M4 2v11.500h5" fill="none" stroke="#2a66c8" strokeWidth="2" /><path d="M11 1v5" stroke="#1c50c8" strokeWidth="2.500" /><path d="M7.500 5.500h7L11 10z" fill="#1c50c8" /></g>,
};

const IconSvg = styled.svg`
  flex: none;
  overflow: visible;
`;
const Icon = ({ n, size = 26 }: { n: string; size?: number }) => (
  <IconSvg width={size} height={size} viewBox="0 0 16 16" aria-hidden="true">{ICONS[n]}</IconSvg>
);

type Item = string;
/* "+" raised, "-" pressed, "v" caret, "w" dim caret, "|" separator */
const renderItem = (it: Item, i: number) => {
  if (it === '|') return <Sep key={i} />;
  if (it === 'v' || it === 'w') return <Caret key={i} type="button" $dim={it === 'w'} aria-label="More" />;
  const kind = it[0] === '+' ? 'up' : it[0] === '-' ? 'down' : undefined;
  const n = kind ? it.slice(1) : it;
  return <Tool key={i} type="button" $kind={kind} aria-label={n}><Icon n={n} /></Tool>;
};
const Tools = ({ items, pad, children }: { items: Item[]; pad?: number; children?: React.ReactNode }) => (
  <Group $pad={pad}><Handlebar />{items.map(renderItem)}{children}</Group>
);
const Tri = ({ d, w = 10, h = 7, c = 'currentColor' }: { d: 'up' | 'down' | 'left' | 'right'; w?: number; h?: number; c?: string }) => {
  const p = { up: '0,10 10,10 5,0', down: '0,0 10,0 5,10', left: '10,0 10,10 0,5', right: '0,0 0,10 10,5' }[d];
  return <svg width={w} height={h} viewBox="0 0 10 10" preserveAspectRatio="none"><polygon points={p} fill={c} /></svg>;
};

/* ---------- waveform ---------- */
const START = 596;
const END = 2512;
const at = (k: number) => Math.round(627 + 63.27 * k);

const levels = (edges: number[], hi: number, lo: number) => {
  let d = `M${START - 1} ${lo - 9}V${lo}`;
  edges.forEach((k, i) => { d += `H${at(k) - 1}L${at(k)} ${i % 2 ? lo : hi}`; });
  return `${d}H${END}`;
};
const clock = () => {
  let d = 'M595 391V401';
  for (let k = 0; k < 30; k++) d += `H${at(k) - 1}V383L${at(k) + 1} 381H${at(k) + 29}L${at(k) + 31} 383V401`;
  return `${d}H${END}`;
};
type Cells = [number, string][];
const SEG: Cells = [[6, '01100000'], [16, '11011010'], [18, '11110010'], [26, '01100110'], [28, '11111100']];
const cellsOf = (values: string): Cells =>
  values.split(' ').map((v, k) => [k, v] as [number, string]).filter(([, v]) => v !== '-');
const NEXT = cellsOf('0010 0011 0001 0010 0011 0100 0000 0001 0010 0011 0001 - - 0010 0011 0100 0011 0100 0011 0001 0010 0000 0001 0010 0011 0100 0011 0100 0011 0...');
const STATE = cellsOf('0001 0010 0011 0001 0010 0011 0100 0000 0001 0010 0011 0001 - - 0010 0011 0100 0011 0100 0011 0001 0010 0000 0001 0010 0011 0100 0011 0100 0...');

const Bus = ({ cells, y, first }: { cells: Cells; y: number; first?: string }) => {
  let from = START + 2;
  let d = `M${START + 2} ${y}L${START} ${y + 6}V${y + 14}L${START + 2} ${y + 20}`;
  cells.map(([k]) => at(k)).forEach((s) => {
    d += `M${from} ${y}H${s - 2}L${s + 2} ${y + 20}M${from} ${y + 20}H${s - 2}L${s + 2} ${y}`;
    from = s + 2;
  });
  d += `M${from} ${y}H${END}M${from} ${y + 20}H${END}`;
  return (
    <g>
      <path d={d} fill="none" stroke="#7fb487" strokeWidth="2" />
      <g fill="#dcd6de">
        {first && <text x={603} y={y + 17}>{first}</text>}
        {cells.map(([k, v]) => <text key={k} x={at(k) + 7} y={y + 17}>{v}</text>)}
      </g>
    </g>
  );
};

const INK = [
  'M660 466V499', 'M720 459C708 462 709 496 722 496C734 494 732 458 720 459',
  'M779 476C779 492 780 503 786 503C799 503 799 467 789 467C780 467 777 480 779 488', 'M838 465V495',
  'M905 476C908 490 910 500 918 500C930 496 931 464 922 463C914 463 910 472 911 478', 'M974 468L976 500',
  'M1046 473C1046 485 1042 490 1042 505', 'M1102 477C1110 471 1118 474 1114 484C1109 498 1101 507 1096 505C1090 500 1094 476 1104 474',
  'M1167 466C1167 490 1169 510 1163 508L1158 504', 'M1213 481C1215 470 1222 463 1228 464C1235 470 1232 495 1222 503C1216 506 1212 498 1210 494',
  'M1297 468C1284 466 1280 508 1288 508C1298 504 1304 468 1294 468', 'M1381 472C1370 466 1354 500 1361 511C1372 516 1386 476 1381 472C1372 470 1362 480 1359 488',
  'M1408 486C1402 500 1408 515 1416 515C1430 510 1438 472 1428 469C1418 467 1411 478 1411 488', 'M1476 459C1477 480 1471 490 1470 505',
  'M1548 482C1534 480 1534 512 1547 513C1560 512 1560 482 1548 482', 'M1606 484L1607 506',
  'M1672 474C1660 474 1660 512 1669 514C1682 514 1684 474 1672 474', 'M1724 462C1718 480 1718 490 1716 501',
  'M1797 471C1788 474 1789 508 1798 509C1808 508 1806 470 1797 471', 'M1861 468C1846 464 1842 500 1852 506C1862 504 1862 480 1861 468',
  'M1917 471C1916 490 1919 500 1919 519', 'M1976 478C1975 500 1977 505 1974 524',
  'M2052 484C2044 486 2042 510 2051 517C2060 514 2058 482 2052 484', 'M2112 467C2111 490 2114 500 2114 514',
  'M2176 471C2160 468 2156 508 2169 511C2186 508 2188 474 2176 471', 'M2233 474C2236 490 2237 505 2235 520',
];

const WaveBody = () => (
  <svg width="100%" height="100%" role="img" aria-label="Waveform">
    <g transform="translate(-590 -374)" fontFamily={UI} fontSize="17">
      {Array.from({ length: 18 }, (_, i) => {
        const x = Math.round(700.5 + i * 105.4);
        return <line key={i} x1={x} x2={x} y1="374" y2="3000" stroke="#7c7c7c" strokeWidth="2" />;
      })}
      <g fill="none" stroke="#09a012" strokeWidth="2">
        <path d={clock()} />
        <path d={`M595 420V429H${END}`} />
        <path d={levels([0, 1, 3, 4, 5, 7, 8, 9, 13, 14, 15, 16, 17, 18, 20, 22, 23, 24, 25, 26, 27, 28], 523, 542)} />
        <path d={levels([6, 7, 16, 17, 18, 19, 26, 27, 28, 29], 551, 571)} />
      </g>
      <Bus cells={SEG} y={438} first="11111100" />
      <Bus cells={NEXT} y={466} />
      <Bus cells={STATE} y={494} />
      <rect x="626" y="375" width="5" height="3000" fill="#f7c600" />
      <g fill="none" stroke="#ff0000" strokeWidth="8" strokeLinecap="round" strokeLinejoin="round">
        {INK.map((d) => <path key={d} d={d} />)}
      </g>
      <g fill="#0b63cc">
        <path d="M752 448h2q2 40 8 72q-3 6-7 0z" />
        <path d="M1397 434q2-3 3 2l-5 101q-3 5-5 0z" />
      </g>
      <g fill="none" stroke="#0b63cc" strokeLinecap="round" strokeLinejoin="round">
        <path strokeWidth="12" d="M769 443C790 447 850 440 910 438L1003 438L998 500" />
        <path strokeWidth="7" d="M1405 430C1430 433 1450 426 1466 422C1490 421 1500 416 1519 413" />
        <path strokeWidth="9" d="M1519 414C1545 410 1560 411 1568 414C1590 422 1600 419 1612 419Q1619 421 1619 436L1623 508" />
      </g>
      <path d="M1511 390h2l2 60 3 60q-4 7-7 0l-1-60z" fill="#ffc636" />
      <path d="M1512 388L1541 386V395L1530 394z" fill="#ffc636" />
      <path d="M1541 391C1600 391 1620 391 1644 388C1680 381 1700 380 1710 381C1730 390 1740 386 1753 387Q1757 388 1755 400L1747 508" fill="none" stroke="#ffc636" strokeWidth="9" strokeLinejoin="round" strokeLinecap="round" />
    </g>
  </svg>
);

const Ruler = () => (
  <svg width="100%" height="64" role="img" aria-label="Timeline">
    <g transform="translate(-590 -1293)" fontFamily={UI} fontSize="17">
      {Array.from({ length: 45 }, (_, i) => {
        const n = i + 1;
        const x = Math.round(595 + n * 42.17);
        return <line key={n} x1={x} x2={x} y1={n % 5 ? 1297 : 1293} y2="1304" stroke="#0bb41a" strokeWidth="2" />;
      })}
      <g fill="#0ccb1c" textAnchor="middle">
        {[4, 8, 12, 16].map((m) => <text key={m} x={Math.round(595 + m * 105.43)} y="1325">{`${m}000000 ps`}</text>)}
        <text x="603" y="1325">ps</text>
      </g>
      <line x1="590" x2="2515" y1="1330" y2="1330" stroke="#6a6a6a" strokeWidth="2" />
      <rect x="626" y="1293" width="5" height="37" fill="#f7c600" />
      <rect x="597" y="1332" width="91" height="24" fill="#000" stroke="#d9ae10" strokeWidth="2" />
      <text x="600" y="1352" fill="#eebb10">316121 ps</text>
    </g>
  </svg>
);

const SIGNALS: { name: string; value: string; bus?: boolean }[] = [
  { name: 'clk', value: '1' },
  { name: 'clr', value: '0' },
  { name: 'seg', value: '11111100', bus: true },
  { name: 'next_state', value: '0010', bus: true },
  { name: 'state', value: '0001', bus: true },
  { name: 'x', value: 'St1' },
  { name: 'z', value: 'St0' },
];

const Cross = ({ size = 14 }: { size?: number }) => (
  <svg width={size} height={size} viewBox="0 0 10 10"><path d="M1 1l8 8M9 1L1 9" stroke="#111" strokeWidth="1.700" /></svg>
);

export default function App() {
  return (
    <Page>
      <Global />
      <Top>
        <GhostTitle><Icon n="ghost" size={24} />Wave</GhostTitle>
        <GhostMenu>
          {['File', 'Edit', 'View', 'Add', 'Format', 'Tools', 'Bookmarks', 'Window', 'Help'].map((m) => <span key={m}>{m}</span>)}
        </GhostMenu>
        <GhostControls>
          <svg width="20" height="22" viewBox="0 0 20 22" fill="none" stroke="#020202" strokeWidth="2"><rect x="2" y="6" width="11" height="14" rx="2" /><path d="M6 3h8q3 0 3 3v10" /></svg>
          <svg width="20" height="22" viewBox="0 0 20 22" stroke="#020202" strokeWidth="2"><path d="M2 3l16 16M18 3L2 19" /></svg>
        </GhostControls>
        <StatusLine>
          <StatusSide $gap={13}>
            <svg width="42" height="30" viewBox="0 0 42 30" fill="none" stroke="#f0f0f0" strokeWidth="3">
              <path d="M6 9Q22-5 38 9" /><path d="M14 14q9-7 19 1" /><path d="M20 19q4-2 8 1" />
              <path d="M4 27a7.500 7.500 0 1 1 11 0M7 23a3.500 3.500 0 1 1 5 0" strokeWidth="2" />
              <circle cx="9" cy="22" r="1.500" fill="#f0f0f0" stroke="none" /><circle cx="23" cy="26" r="3" fill="#f0f0f0" stroke="none" />
              <path d="M32 23l-3 3 3 3zM35 21l4 4-4 3z" fill="#f0f0f0" stroke="none" />
            </svg>
            <span>2.22K/s</span>
            <StatusSide $gap={12}>
              <svg width="30" height="30" viewBox="0 0 30 30"><rect width="30" height="30" rx="7" fill="#0a7cff" /><path d="M7 9h5q-1-4 2.500-4T17 9h6v5q3-1 3 2.500T23 19v5h-6q1-4-2-4t-2 4H7v-6q3 1 3-2t-3-2z" fill="#fff" /></svg>
              <Listen>听</Listen>
              <svg width="25" height="26" viewBox="0 0 25 26"><rect width="25" height="26" rx="7" fill="#eeeeea" /><rect x="5" y="6" width="15" height="14" fill="#466a70" /><path d="M7 13h11" stroke="#dde" strokeWidth="3" strokeDasharray="2 1" /></svg>
              <svg width="27" height="27" viewBox="0 0 27 27"><rect width="27" height="27" rx="6" fill="#3f88ec" /><path d="M8 20a4 4 0 0 1-1-8 6.500 6.500 0 0 1 12.500 0 4.500 4.500 0 0 1 0 8z" fill="#fff" /><circle cx="10" cy="16" r="4.500" fill="#cfe4fc" /></svg>
              <svg width="27" height="27" viewBox="0 0 27 27"><rect width="27" height="27" rx="6" fill="#ee5058" /><path d="M4 7q5-2 9 0v14q-4-2-9 0zM14 7q4-2 9 0v14q-5-2-9 0z" fill="#fff" /></svg>
              <svg width="24" height="8" viewBox="0 0 24 8" fill="#ddd"><circle cx="3" cy="4" r="2.500" /><circle cx="12" cy="4" r="2.500" /><circle cx="21" cy="4" r="2.500" /></svg>
            </StatusSide>
          </StatusSide>
          <Handle />
          <StatusSide $gap={7}>
            <svg width="32" height="28" viewBox="0 0 32 28" fill="none" stroke="#f0f0f0" strokeWidth="3"><path d="M2 14Q9 2 16 2t14 12q-7 12-14 12T2 14z" /><circle cx="16" cy="14" r="6" fill="#f0f0f0" stroke="none" /><path d="M13 15a3.500 3.500 0 0 1 3-4" stroke="#000" strokeWidth="2" /></svg>
            <svg width="32" height="32" viewBox="0 0 32 32" fill="none" stroke="#f0f0f0"><path d="M4 28L23 9" strokeWidth="6" strokeLinecap="round" /><path d="M25 7l3-3" strokeWidth="6" strokeLinecap="round" /><path d="M3 15Q4 4 15 2M9 15q0-6 7-7" strokeWidth="2.500" /></svg>
            <svg width="24" height="32" viewBox="0 0 24 32" fill="none" stroke="#f0f0f0" strokeWidth="3"><path d="M4 9l15 13-7 7V3l7 7L4 23" /><path d="M1 13l3 3-3 3M23 13l-3 3 3 3" strokeWidth="2" /></svg>
            <svg width="30" height="30" viewBox="0 0 30 30"><path d="M12 1a13.500 13.500 0 1 0 17 17A12 12 0 0 1 12 1z" fill="#f0f0f0" /></svg>
            <span>74%</span>
            <svg width="54" height="28" viewBox="0 0 54 28" fill="none" stroke="#f0f0f0"><rect x="1.500" y="1.500" width="45" height="25" rx="6" strokeWidth="2.500" /><rect x="6" y="6" width="29" height="16" rx="2" fill="#f0f0f0" stroke="none" /><path d="M51 8v12" strokeWidth="3" strokeLinecap="round" /></svg>
            <span>19:16</span>
          </StatusSide>
        </StatusLine>
        <AppBar>
          <AppSide>
            <BackButton type="button" aria-label="Back">
              <svg width="56" height="56" viewBox="0 0 56 56" fill="none" stroke="#cfcfcf" strokeWidth="3.500" strokeLinecap="round"><path d="M8 27h43M29 6L8 27l21 21" /></svg>
            </BackButton>
            <div>
              <DateTitle>2023年10月6日</DateTitle>
              <DateTime>19:16</DateTime>
            </div>
          </AppSide>
          <Actions>
            <ActionButton type="button" $first aria-label="Info">
              <svg width="60" height="60" viewBox="0 0 60 60" fill="none" stroke="#c6c6c6" strokeWidth="4"><circle cx="30" cy="29" r="26" /><path d="M30 25v18" strokeLinecap="round" strokeWidth="5" /><circle cx="30" cy="17" r="3.500" fill="#c6c6c6" stroke="none" /></svg>
            </ActionButton>
            <ActionButton type="button" aria-label="Share">
              <svg width="60" height="60" viewBox="0 0 60 60" fill="none" stroke="#c6c6c6" strokeWidth="4"><circle cx="31" cy="13" r="6" /><circle cx="10" cy="47" r="6" /><circle cx="50" cy="47" r="6" /><path d="M28 18L13 42M16 47h28" /></svg>
            </ActionButton>
            <ActionButton type="button" aria-label="Like">
              <svg width="60" height="60" viewBox="0 0 60 60" fill="none" stroke="#c6c6c6" strokeWidth="4" strokeLinejoin="round"><path d="M30 54C14 42 4 32 4 21C4 6 24 2 30 15C36 2 56 6 56 21C56 32 46 42 30 54z" /></svg>
            </ActionButton>
            <ActionButton type="button" aria-label="Edit">
              <svg width="60" height="60" viewBox="0 0 60 60" fill="none" stroke="#c6c6c6" strokeWidth="3.500" strokeLinejoin="round" strokeLinecap="round"><path d="M5 52v-8L45 7l6 6L12 51zM39 12l6 7" /><path d="M28 52h26" /></svg>
            </ActionButton>
            <ActionButton type="button" aria-label="Delete">
              <svg width="60" height="60" viewBox="0 0 60 60" fill="none" stroke="#d6d6d6" strokeWidth="4" strokeLinecap="round" strokeLinejoin="round"><path d="M4 12h52M9 12l3 41q0 4 4 4h28q4 0 4-4l3-41M21 11V7q0-3 3-3h12q3 0 3 3v4M25 21v25M35 21v25" /></svg>
            </ActionButton>
            <ActionButton type="button" $narrow aria-label="More options">
              <svg width="28" height="60" viewBox="0 0 28 60" fill="#d6d6d6"><circle cx="14" cy="9" r="4" /><circle cx="14" cy="30" r="4" /><circle cx="14" cy="51" r="4" /></svg>
            </ActionButton>
          </Actions>
        </AppBar>
      </Top>

      <Window>
        <TitleBar>
          <Icon n="waveWin" size={25} />
          <TitleText>Wave - Default</TitleText>
          <GripLines><GripDots /></GripLines>
          <TitleButtons>
            <TitleButton type="button" aria-label="Minimize"><svg width="19" height="18"><path d="M3 8l2 2 2-2 2 2 2-2 2 2 2-2" fill="none" stroke="#777" strokeWidth="2" /></svg></TitleButton>
            <TitleButton type="button" aria-label="Undock"><svg width="19" height="18"><path d="M4 6v9h9V9" fill="none" stroke="#222" strokeWidth="2" /><path d="M16 2L9 9M7 5v6h6" stroke="#000" strokeWidth="3" fill="none" /></svg></TitleButton>
            <TitleButton type="button" aria-label="Close"><svg width="19" height="18"><path d="M4 4l11 11M15 4L4 15" stroke="#111" strokeWidth="3" /></svg></TitleButton>
          </TitleButtons>
        </TitleBar>

        <ToolbarRow>
          <Tools items={['new', 'v', 'open', 'save', 'refresh', 'print', '|', 'cut', 'copy', 'paste', 'undo', 'redo', '|', 'bolt', 'w', 'find', 'tree']} />
          <Tools pad={2} items={['stack', 'rebuild', 'restart', 'dots', 'kill']} />
          <Tools items={['+link', 'up', 'left', 'right', '|', 'runUp']}>
            <TimeInput aria-label="Run length" defaultValue="100 ps" />
            <Spinner>
              <SpinButton type="button" aria-label="Increase"><Tri d="up" w={12} h={9} /></SpinButton>
              <SpinButton type="button" aria-label="Decrease"><Tri d="down" w={12} h={9} /></SpinButton>
            </Spinner>
            {['runEnd', 'runStep', 'runAll', 'kill', 'stop', '|', '+profP', '+profM', 'hand'].map(renderItem)}
          </Tools>
          <Tools pad={4} items={['stepIn', 'stepOver', 'stepOut', '|', 'stepInG', 'w', 'stepOverG', 'stepOutG']} />
          <Tools items={['boxAdd', 'v', 'boxDel', 'v', 'boxEdit', 'boxSave', 'v', 'boxGo']} />
          <Tools items={['-pointer', '+zoomBox', '+pan', '+cursors', '+edges', '|', 'light']} />
        </ToolbarRow>
        <ToolbarRow>
          <Tools items={['curAdd', 'curDel', 'prevEdge', 'nextEdge', 'edgeA', 'edgeB', 'edgeC', 'edgeD']} />
          <Tools items={['mergeL', 'w', 'mergeR', 'w', 'gate', '|']}>
            <SearchLabel htmlFor="search">Search:</SearchLabel>
            <SearchInput id="search" />
            <DropButton type="button" aria-label="Search history"><Tri d="down" w={18} h={11} c="#666" /></DropButton>
            {['findPrev', 'findNext', 'findOpt'].map(renderItem)}
          </Tools>
          <Tools pad={4} items={['zoomIn', 'zoomOut', 'zoomFull', 'zoomCur', 'zoomTwo', 'zoomSel']} />
          <Tools items={['-patA', '+patB', '+patC', '|', 'patD', 'patE', 'patF', 'patG']} />
        </ToolbarRow>

        <Panes>
          <HeadCell><Icon n="objects" size={27} /><Caret type="button" aria-label="Objects" /></HeadCell>
          <HeadCell $end>Msgs</HeadCell>
          <Black>
            <svg width="100%" height="31"><rect x="36" y="2" width="5" height="29" fill="#f7c600" /></svg>
          </Black>
          <Gray />

          <NamesPane>
            <SignalList>
              {SIGNALS.map((s) => (
                <NameRow key={s.name}>
                  <ExpandSlot>
                    {s.bus && <Expand type="button" aria-label={`Expand ${s.name}`}><svg width="9" height="9"><path d="M4.500 0v9M0 4.500h9" stroke="#111" strokeWidth="2" /></svg></Expand>}
                  </ExpandSlot>
                  <Icon n="diamond" size={25} />
                  <SignalName>/xuliejiance_vlg_tst/{s.name}</SignalName>
                </NameRow>
              ))}
            </SignalList>
            <EndLine />
          </NamesPane>
          <ValuesPane>
            <SignalList>{SIGNALS.map((s) => <ValueRow key={s.name}>{s.value}</ValueRow>)}</SignalList>
            <EndLine />
          </ValuesPane>
          <Black><WaveBody /></Black>
          <VScroll>
            <VButton type="button" aria-label="Scroll up"><Tri d="up" w={12} /></VButton>
            <VThumb />
            <VButton type="button" aria-label="Scroll down"><Tri d="down" w={14} h={8} /></VButton>
          </VScroll>

          <CursorCell>
            <NowRow>
              <AppSide><Icon n="gear" size={19} /><Icon n="sheet" size={19} /><Icon n="plus" size={19} /></AppSide>
              <span>Now</span>
            </NowRow>
            <CursorLine>
              <CursorIcons><Icon n="lock" size={20} /><Icon n="wrench" size={20} /><Icon n="minus" size={20} /></CursorIcons>
              <CursorRow>Cursor 1</CursorRow>
            </CursorLine>
          </CursorCell>
          <CursorCell>
            <NowRow $small><span />358654506452 ps</NowRow>
            <CursorRow $small>316121 ps</CursorRow>
          </CursorCell>
          <Black><Ruler /></Black>
          <Gray />

          <HScroll $inset={14}>
            <ScrollButton type="button" $disabled aria-label="Names left"><Tri d="left" w={8} h={12} /></ScrollButton>
            <ScrollButton type="button" $disabled aria-label="Names right"><Tri d="right" w={8} h={12} /></ScrollButton>
          </HScroll>
          <HScroll>
            <ScrollButton type="button" $disabled aria-label="Values left"><Tri d="left" w={8} h={12} /></ScrollButton>
            <ScrollButton type="button" $disabled aria-label="Values right"><Tri d="right" w={8} h={12} /></ScrollButton>
          </HScroll>
          <HScroll $dark>
            <ScrollButton type="button" $small aria-label="Waves left"><Tri d="left" w={8} h={12} /></ScrollButton>
            <Thumb />
            <ScrollButton type="button" $small aria-label="Waves right"><Tri d="right" w={8} h={12} /></ScrollButton>
          </HScroll>
          <Gray />
        </Panes>

        <FindBar>
          <CloseFind type="button" aria-label="Close find"><Cross /></CloseFind>
          <label htmlFor="find">Find:</label>
          <FindField>
            <Icon n="findDark" size={25} />
            <FindInput id="find" />
          </FindField>
          <FindButton type="button" $kind="up" aria-label="Go"><Icon n="play" /></FindButton>
          <Spacer />
          <FindButton type="button" $kind="up" aria-label="Find next"><Icon n="down" /></FindButton>
          <FindButton type="button" $kind="up" aria-label="Report"><Icon n="report" /></FindButton>
          <Sep />
          <SearchFor type="button">Search For<Tri d="down" w={14} h={8} /></SearchFor>
          <Sep />
          <OptionLabel><Check type="checkbox" /><Braces>{'{'}<b>a</b>{'}'}</Braces></OptionLabel>
          <OptionLabel><Check type="checkbox" defaultChecked aria-label="Wrap" /><Icon n="wrap" /></OptionLabel>
        </FindBar>

        <StatusBar>
          <StatusCell>0 ps to 18208560 ps</StatusCell>
          <StatusCell $fill>{'Now: 494,482,502,699 ps  Delta: 0'}</StatusCell>
          <SizeGrip><svg width="18" height="18"><path d="M1 17L17 1M7 17L17 7M13 17l4-4" stroke="#999" strokeWidth="2" /></svg></SizeGrip>
        </StatusBar>
      </Window>

      <Watermark>CSDN @猪蹄炖粉条442</Watermark>
    </Page>
  );
}
